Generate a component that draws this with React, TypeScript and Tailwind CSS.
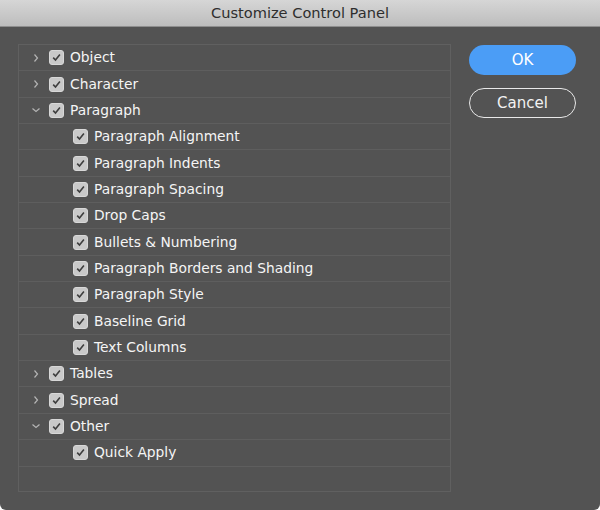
import { useState } from 'react'

type Row = { label: string; depth: 0 | 1; open?: boolean }

const rows: Row[] = [
  { label: 'Object', depth: 0, open: false },
  { label: 'Character', depth: 0, open: false },
  { label: 'Paragraph', depth: 0, open: true },
  { label: 'Paragraph Alignment', depth: 1 },
  { label: 'Paragraph Indents', depth: 1 },
  { label: 'Paragraph Spacing', depth: 1 },
  { label: 'Drop Caps', depth: 1 },
  { label: 'Bullets & Numbering', depth: 1 },
  { label: 'Paragraph Borders and Shading', depth: 1 },
  { label: 'Paragraph Style', depth: 1 },
  { label: 'Baseline Grid', depth: 1 },
  { label: 'Text Columns', depth: 1 },
  { label: 'Tables', depth: 0, open: false },
  { label: 'Spread', depth: 0, open: false },
  { label: 'Other', depth: 0, open: true },
  { label: 'Quick Apply', depth: 1 },
]

function Chevron({ open }: { open?: boolean }) {
  return (
    <svg width="10" height="10" viewBox="0 0 10 10" className="shrink-0">
      {open ? (
        <path d="M1.5 3.5 L5 6.5 L8.5 3.5" fill="none" stroke="#b4b4b4" strokeWidth="1.2" />
      ) : (
        <path d="M3.5 1.5 L6.5 5 L3.5 8.5" fill="none" stroke="#b4b4b4" strokeWidth="1.2" />
      )}
    </svg>
  )
}

function Check({ on, toggle }: { on: boolean; toggle: () => void }) {
  return (
    <button
      onClick={toggle}
      className="flex h-[15px] w-[15px] shrink-0 items-center justify-center rounded-[3px] border border-[#d8d8d8] bg-[#c9c9c9]"
    >
      {on && (
        <svg width="11" height="11" viewBox="0 0 11 11">
          <path d="M2.2 5.6 L4.5 8 L8.9 2.6" fill="none" stroke="#3e3e3e" strokeWidth="1.6" />
        </svg>
      )}
    </button>
  )
}

export default function App() {
  const [checked, setChecked] = useState<boolean[]>(rows.map(() => true))

  return (
    <div className="h-[510px] w-[600px] bg-white font-['DejaVu_Sans',sans-serif]">
      <div className="flex h-full flex-col overflow-hidden rounded-b-[6px] bg-[#535353]">
        <div className="flex h-[27px] shrink-0 items-center justify-center border-b border-[#8e8e8e] bg-gradient-to-b from-[#d6d6d6] to-[#bdbdbd] text-[14.6px] text-[#2e2e2e]">
          Customize Control Panel
        </div>
        <div className="flex flex-1 pl-[18px] pt-[17px]">
          <div className="h-[448px] w-[433px] border border-[#606060]">
            {rows.map((r, i) => (
              <div
                key={r.label}
                className="flex h-[26.35px] items-center border-b border-[#5e5e5e] text-[13.8px] text-[#f5f5f5]"
              >
                {r.depth === 0 ? (
                  <div className="flex items-center">
                    <div className="ml-[12px] w-[10px]">
                      <Chevron open={r.open} />
                    </div>
                    <div className="ml-[8px]">
                      <Check
                        on={checked[i]}
                        toggle={() => setChecked(c => c.map((v, j) => (j === i ? !v : v)))}
                      />
                    </div>
                    <span className="ml-[6px]">{r.label}</span>
                  </div>
                ) : (
                  <div className="ml-[54px] flex items-center">
                    <Check
                      on={checked[i]}
                      toggle={() => setChecked(c => c.map((v, j) => (j === i ? !v : v)))}
                    />
                    <span className="ml-[6px]">{r.label}</span>
                  </div>
                )}
              </div>
            ))}
          </div>
          <div className="ml-[18px] flex flex-col gap-[13px] pt-[1px]">
            <button className="h-[30px] w-[107px] rounded-full bg-[#4b9df6] text-[15px] text-white">
              OK
            </button>
            <button className="h-[30px] w-[107px] rounded-full border border-[#e8e8e8] text-[15px] text-[#f2f2f2]">
              Cancel
            </button>
          </div>
        </div>
      </div>
    </div>
  )
}
